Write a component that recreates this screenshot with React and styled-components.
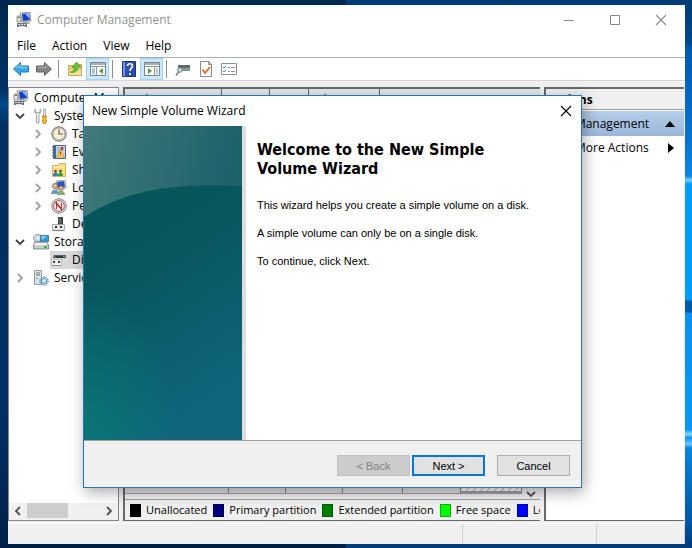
import React from 'react'
import styled, { createGlobalStyle } from 'styled-components'

const GlobalStyle = createGlobalStyle`
	* {
		box-sizing: border-box;
	}
	body {
		margin: 0;
		font-family: "Open Sans", "Noto Sans", sans-serif;
		font-size: 12px;
		line-height: 18px;
		color: #000;
	}
	button {
		font: inherit;
		color: inherit;
		padding: 0;
	}
`

const ComputerIcon = () => (
	<svg width="16" height="16" viewBox="0 0 16 16">
		<path d="M4 1l10-1 1 9-9 1z" fill="#dcdccc" stroke="#77776b" strokeWidth=".7" />
		<path d="M6 2l7-1 1 7-7 1z" fill="#153ccb" />
		<path d="M9 2l4-1 1 6z" fill="#8fb4ff" />
		<path d="M1 4h4v6H1z" fill="#e6e4d8" stroke="#76766c" strokeWidth=".7" />
		<path d="M2 5h2v1H2z" fill="#55606c" />
		<path d="M6 10h7l1 2H5z" fill="#b9b9b0" />
		<path d="M1 11h10v4H1z" fill="#6c757f" />
		<path d="M2 12h2v1H2zM5 12h2v1H5zM8 12h2v1H8zM3 14h6v1H3z" fill="#dbe3ea" />
	</svg>
)

const ToolsIcon = () => (
	<svg width="16" height="16" viewBox="0 0 16 16">
		<path d="M2.500 1C1 2 1 5 3.500 6.500V15h2.500V6.500C8.500 5 8.500 2 7 1v3.500H2.500z" fill="#e9edef" stroke="#8b949a" strokeWidth=".8" />
		<path d="M10.500 1h2v7h-2z" fill="#e4e8ea" stroke="#959ba0" strokeWidth=".7" />
		<path d="M9.500 8h4v2l-1 1 1 1v2l-1 1.500h-2L9.500 14v-2l1-1-1-1z" fill="#f4b41e" stroke="#b87b0a" strokeWidth=".7" />
	</svg>
)

const ClockIcon = () => (
	<svg width="16" height="16" viewBox="0 0 16 16">
		<circle cx="8" cy="8" r="7.200" fill="#c9c7c3" stroke="#77756f" />
		<circle cx="8" cy="8" r="5.600" fill="#fff0d2" stroke="#aaa69a" strokeWidth=".6" />
		<path d="M8 3.500V8h4" fill="none" stroke="#5c5b58" strokeWidth="1.200" />
	</svg>
)

const EventIcon = () => (
	<svg width="16" height="16" viewBox="0 0 16 16">
		<path d="M2.500 1.500h12v13h-12z" fill="#c5d8ea" stroke="#4c6482" />
		<path d="M3 2h2v12H3z" fill="#3a6ca8" />
		<path d="M1 3h3M1 6h3M1 9h3M1 12h3" stroke="#5b646e" />
		<path d="M6 4h7M6 6h7M6 8h4M6 12h7" stroke="#8198b3" strokeWidth=".8" />
		<path d="M10 3h2v3h-2z" fill="#d22" />
		<path d="M9.500 6l4 7h-8z" fill="#ffd83b" stroke="#c58514" strokeWidth=".7" />
		<path d="M9 8h1v3H9z" fill="#c22" />
	</svg>
)

const SharedIcon = () => (
	<svg width="16" height="16" viewBox="0 0 16 16">
		<path d="M1.500 3.500h6l1-2h6v13h-13z" fill="#f8dd83" stroke="#cfa43d" strokeWidth=".8" />
		<path d="M2 5h12" stroke="#fff3bd" />
		<circle cx="4.500" cy="9" r="1.300" fill="#5b4738" />
		<circle cx="9.500" cy="9" r="1.300" fill="#5b4738" />
		<path d="M2 14c0-5 5-5 5 0z" fill="#2782bd" />
		<path d="M7 14c0-5 5-5 5 0z" fill="#3b983f" />
	</svg>
)

const UsersIcon = () => (
	<svg width="16" height="16" viewBox="0 0 16 16">
		<path d="M5 1l9-1 1 8-9 2z" fill="#dadcd7" stroke="#788086" strokeWidth=".7" />
		<path d="M6 2l7-1 1 6-7 1z" fill="#2457ca" />
		<circle cx="4" cy="6" r="2.500" fill="#f0ba88" stroke="#6d4930" strokeWidth=".7" />
		<path d="M0 14c0-6 8-6 8 0z" fill="#7399c2" />
		<circle cx="10" cy="8" r="2.300" fill="#eeb583" stroke="#6d4930" strokeWidth=".7" />
		<path d="M6 15c0-6 8-6 8 0z" fill="#82ad70" />
	</svg>
)

const PerformanceIcon = () => (
	<svg width="16" height="16" viewBox="0 0 16 16">
		<circle cx="8" cy="8" r="7.300" fill="#d0d1d2" stroke="#777c80" strokeWidth=".8" />
		<circle cx="8" cy="8" r="5.300" fill="#fff" stroke="#b44" strokeWidth=".9" />
		<path d="M5.500 11V6M10.500 10V5" fill="none" stroke="#cf3030" strokeWidth="1.200" />
		<path d="M4.500 4l6.500 8" stroke="#962424" strokeWidth="1.400" />
	</svg>
)

const DeviceIcon = () => (
	<svg width="16" height="16" viewBox="0 0 16 16">
		<path d="M7 1h5v8H7z" fill="#3e4346" />
		<path d="M8 2h2v5H8z" fill="#686e71" />
		<path d="M1.500 8.500h12v6h-12z" fill="#e6e8e5" stroke="#9b9f9d" strokeWidth=".8" />
		<path d="M4 10h2v2H4zM9 10h2v2H9z" fill="#353a3b" />
		<path d="M2 14h11v1H2z" fill="#747878" />
	</svg>
)

const StorageIcon = () => (
	<svg width="16" height="16" viewBox="0 0 16 16">
		<ellipse cx="5" cy="4" rx="4.500" ry="3.500" fill="#cfdde2" stroke="#758489" strokeWidth=".7" />
		<circle cx="5" cy="4" r="1" fill="#fff" />
		<path d="M7.500 1.500h8v6h-8z" fill="#2d9de1" stroke="#3d6983" strokeWidth=".8" />
		<path d="M8 2h6l-5 4z" fill="#7ccbf7" />
		<path d="M1.500 8h12l2 3v4h-15v-4z" fill="#c7cfcd" stroke="#6d7777" strokeWidth=".8" />
		<path d="M2 9h11l1 2H1z" fill="#f0f3f2" />
		<path d="M11 12h3v2h-3z" fill="#38b440" />
	</svg>
)

const DiskIcon = () => (
	<svg width="16" height="16" viewBox="0 0 16 16">
		<path d="M2 5l1-2h12v3H2z" fill="#596168" />
		<path d="M5 4h9v2H5z" fill="#30373b" />
		<path d="M12 4h2v1h-2z" fill="#42d74c" />
		<path d="M.500 7.500h10v6H.500z" fill="#f5f5f1" stroke="#aaada8" strokeWidth=".7" />
		<path d="M2 9h2v2H2zM7 9h2v2H7z" fill="#353a3b" />
		<path d="M1 13h9v1H1z" fill="#8d9291" />
	</svg>
)

const ServicesIcon = () => (
	<svg width="16" height="16" viewBox="0 0 16 16">
		<path d="M1.500.500h7v14h-7z" fill="#dce4e9" stroke="#7a8892" strokeWidth=".8" />
		<path d="M3 3h4M3 5h4" stroke="#667782" />
		<path d="M3 8h2v1H3z" fill="#4baa49" />
		<circle cx="11" cy="11" r="4" fill="none" stroke="#5490bd" strokeWidth="1.500" strokeDasharray="1.500 1" />
		<circle cx="11" cy="11" r="2.500" fill="#d8edfa" stroke="#518bb9" />
	</svg>
)

const ArrowIcon = ({ forward }) => (
	<svg width="18" height="16" viewBox="0 0 18 16">
		{forward
			? <path d="M1.500 5h8V1.500L16.500 8l-7 6.500V11h-8z" fill="#858585" stroke="#5f5f5f" />
			: <path d="M16.500 5h-8V1.500L1.500 8l7 6.500V11h8z" fill="#38a9e8" stroke="#2379ad" />}
		{forward
			? <path d="M3 6.500h8V4" fill="none" stroke="#b5b5b5" />
			: <path d="M4 7l4-3v2.500h7" fill="none" stroke="#8ed9ff" />}
	</svg>
)

const FolderUpIcon = () => (
	<svg width="16" height="16" viewBox="0 0 16 16">
		<path d="M1.500 4.500h4l1 1h5l1-2h2v11h-13z" fill="#f0cb6c" stroke="#b99746" strokeWidth=".8" />
		<path d="M2 9h12v5H2z" fill="#fbdf92" />
		<path d="M3 11c4 0 4-2 4-5H5l4.500-5L14 6h-3c0 5-4 6-8 5z" fill="#69c83a" stroke="#399324" strokeWidth=".7" />
	</svg>
)

const PaneIcon = ({ right }) => (
	<svg width="16" height="14" viewBox="0 0 16 14">
		<path d="M.500.500h15v13H.500z" fill="#fff" stroke="#7b858e" />
		<path d="M1 1h14v2H1z" fill="#a5b2bf" />
		<path d="M1 4.500h14" stroke="#8c969f" />
		<path d={right ? 'M10.500 5v8' : 'M6.500 5v8'} stroke="#8c969f" />
		<path d={right ? 'M12 7h2M12 9h2M12 11h2' : 'M2 7h3M2 9h3M2 11h3'} stroke="#558abb" />
		<path d={right ? 'M4 6v6l4-3z' : 'M13 6v6L9 9z'} fill="#45a62a" />
	</svg>
)

const HelpIcon = () => (
	<svg width="14" height="16" viewBox="0 0 14 16">
		<path d="M.500.500h13v15H.500z" fill="#294fb5" stroke="#183680" />
		<path d="M1 1h2v14H1z" fill="#7894d7" />
		<path d="M5.500 5c0-3 5-3 5 0 0 2-2.500 2-2.500 5M8 12v2" fill="none" stroke="#fff" strokeWidth="1.700" />
	</svg>
)

const DriveIcon = () => (
	<svg width="16" height="14" viewBox="0 0 16 14">
		<path d="M3 3h12v6H3z" fill="#8b9599" />
		<path d="M3 3h12v3H3z" fill="#5f686c" />
		<path d="M11 6h3v1h-3z" fill="#42e458" />
		<circle cx="5" cy="8" r="2.300" fill="#c9dee6" stroke="#6d8088" />
		<path d="M3.500 10L1 13.500" stroke="#79838a" strokeWidth="1.500" />
	</svg>
)

const CheckPageIcon = () => (
	<svg width="14" height="16" viewBox="0 0 14 16">
		<path d="M1.500.500h8l3 3v12h-11z" fill="#fff" stroke="#8d8d8d" />
		<path d="M9.500.500v3h3" fill="none" stroke="#8d8d8d" />
		<path d="M3.500 8.500L6 12l5-6" fill="none" stroke="#ec672d" strokeWidth="1.800" />
	</svg>
)

const ListIcon = () => (
	<svg width="16" height="12" viewBox="0 0 16 12">
		<path d="M.500.500h15v11H.500z" fill="#fff" stroke="#8a9299" />
		<path d="M2 4l1 1 2-2M2 8l1 1 2-2" fill="none" stroke="#3686c9" />
		<path d="M7 4.500h2M10 4.500h4M7 8.500h2M10 8.500h4" stroke="#899097" />
	</svg>
)

const Chevron = ({ dir }) => {
	const paths = {
		down: 'M1 3l4 4 4-4',
		right: 'M3 1l4 4-4 4',
		left: 'M7 1L3 5l4 4',
	}
	return (
		<svg width="10" height="10" viewBox="0 0 10 10">
			<path d={paths[dir]} fill="none" stroke="currentColor" strokeWidth="1.800" />
		</svg>
	)
}

const CloseIcon = () => (
	<svg width="12" height="12" viewBox="0 0 12 12">
		<path d="M1 1l10 10M11 1L1 11" stroke="currentColor" strokeWidth="1.100" />
	</svg>
)

const toolbarItems = [
	{ label: 'Back', icon: <ArrowIcon /> },
	{ label: 'Forward', icon: <ArrowIcon forward />, divide: true },
	{ label: 'Up one level', icon: <FolderUpIcon />, wide: true },
	{ label: 'Show console tree', icon: <PaneIcon />, active: true, divide: true },
	{ label: 'Help', icon: <HelpIcon />, wide: true },
	{ label: 'Show action pane', icon: <PaneIcon right />, active: true, divide: true },
	{ label: 'Drive', icon: <DriveIcon />, wide: true },
	{ label: 'Properties', icon: <CheckPageIcon /> },
	{ label: 'List', icon: <ListIcon /> },
]

const treeItems = [
	{ text: 'Computer Management', icon: <ComputerIcon />, level: 0 },
	{ text: 'System Tools', icon: <ToolsIcon />, level: 1, dir: 'down' },
	{ text: 'Task Scheduler', icon: <ClockIcon />, level: 2, dir: 'right' },
	{ text: 'Event Viewer', icon: <EventIcon />, level: 2, dir: 'right' },
	{ text: 'Shared Folders', icon: <SharedIcon />, level: 2, dir: 'right' },
	{ text: 'Local Users', icon: <UsersIcon />, level: 2, dir: 'right' },
	{ text: 'Performance', icon: <PerformanceIcon />, level: 2, dir: 'right' },
	{ text: 'Device Manager', icon: <DeviceIcon />, level: 2 },
	{ text: 'Storage', icon: <StorageIcon />, level: 1, dir: 'down' },
	{ text: 'Disk Management', icon: <DiskIcon />, level: 2, selected: true },
	{ text: 'Services', icon: <ServicesIcon />, level: 1, dir: 'right' },
]

const legend = [
	{ text: 'Unallocated', color: '#000' },
	{ text: 'Primary partition', color: '#000080' },
	{ text: 'Extended partition', color: '#008000' },
	{ text: 'Free space', color: '#00ff00' },
	{ text: 'Logical drive', color: '#0000ff' },
]

const App = () => {
	const [open, setOpen] = React.useState(true)

	return (
		<Desktop>
			<GlobalStyle />
			<Window>
				<TitleBar>
					<ComputerIcon />
					<Title>Computer Management</Title>
					<WindowButton aria-label="Minimize">
						<svg width="12" height="12"><path d="M1 6.500h10" stroke="currentColor" /></svg>
					</WindowButton>
					<WindowButton aria-label="Maximize">
						<svg width="12" height="12"><path d="M1.500 1.500h9v9h-9z" fill="none" stroke="currentColor" /></svg>
					</WindowButton>
					<WindowButton aria-label="Close"><CloseIcon /></WindowButton>
				</TitleBar>
				<MenuBar>
					{['File', 'Action', 'View', 'Help'].map(m => <MenuButton key={m}>{m}</MenuButton>)}
				</MenuBar>
				<Toolbar>
					{toolbarItems.map(t => (
						<React.Fragment key={t.label}>
							<ToolButton aria-label={t.label} $active={t.active} $wide={t.wide}>{t.icon}</ToolButton>
							{t.divide && <Divider />}
						</React.Fragment>
					))}
				</Toolbar>
				<Panels>
					<TreePanel>
						<Tree>
							{treeItems.map(t => (
								<TreeRow key={t.text} $level={t.level}>
									{t.level > 0 && <Twisty $open={t.dir === 'down'}>{t.dir && <Chevron dir={t.dir} />}</Twisty>}
									<TreeLabel $selected={t.selected}>{t.icon}<span>{t.text}</span></TreeLabel>
								</TreeRow>
							))}
						</Tree>
						<ScrollBar>
							<ScrollButton aria-label="Scroll left"><Chevron dir="left" /></ScrollButton>
							<Thumb />
							<ScrollButton aria-label="Scroll right"><Chevron dir="right" /></ScrollButton>
						</ScrollBar>
					</TreePanel>
					<VolumePanel>
						<VolumeTable>
							<thead>
								<tr>
									<HeadCell $width="96px">Volume</HeadCell>
									<HeadCell $width="48px">Layout</HeadCell>
									<HeadCell $width="39px">Type</HeadCell>
									<HeadCell $width="71px">File System</HeadCell>
									<HeadCell>Status</HeadCell>
								</tr>
							</thead>
						</VolumeTable>
						<DiskArea>
							<DiskGraph>
								<DiskCell $grow={104} />
								<DiskCell $grow={56} />
								<DiskCell $grow={56} />
								<DiskCell $grow={59} />
								<DiskCell $grow={58} />
								<DiskCell $grow={60} $hatched />
							</DiskGraph>
							<ScrollButton aria-label="Scroll down"><Chevron dir="down" /></ScrollButton>
						</DiskArea>
						<Legend>
							{legend.map(l => (
								<LegendItem key={l.text}><Swatch $color={l.color} />{l.text}</LegendItem>
							))}
						</Legend>
					</VolumePanel>
					<ActionsPanel>
						<ActionsHead>Actions</ActionsHead>
						<ActionGroup>
							<span>Disk Management</span>
							<svg width="10" height="6"><path d="M0 6l5-6 5 6z" /></svg>
						</ActionGroup>
						<ActionRow>
							<span>More Actions</span>
							<svg width="6" height="10"><path d="M0 0l6 5-6 5z" /></svg>
						</ActionRow>
					</ActionsPanel>
				</Panels>
				<StatusBar>
					<StatusCell $grow={455} />
					<StatusCell $grow={133} />
					<StatusCell $grow={87} />
				</StatusBar>
			</Window>
			{open && (
				<Dialog role="dialog" aria-labelledby="wizard-title">
					<DialogTitleBar>
						<DialogTitle id="wizard-title">New Simple Volume Wizard</DialogTitle>
						<WindowButton $dark aria-label="Close wizard" onClick={() => setOpen(false)}><CloseIcon /></WindowButton>
					</DialogTitleBar>
					<DialogBody>
						<Banner>
							<svg width="100%" height="100%" viewBox="0 0 158 314" preserveAspectRatio="none">
								<defs>
									<linearGradient id="sky" x1="0" y1="0" x2="1" y2=".5">
										<stop offset="0" stopColor="#417a79" />
										<stop offset="1" stopColor="#165c68" />
									</linearGradient>
									<linearGradient id="hill" x1="0" y1="0" x2=".4" y2="1">
										<stop offset="0" stopColor="#055457" />
										<stop offset=".4" stopColor="#07575f" />
										<stop offset="1" stopColor="#10657b" />
									</linearGradient>
									<radialGradient id="glow" cx="0" cy="1" r=".6">
										<stop offset="0" stopColor="#087f78" stopOpacity=".7" />
										<stop offset="1" stopColor="#087f78" stopOpacity="0" />
									</radialGradient>
								</defs>
								<path d="M0 0h158v314H0z" fill="url(#sky)" />
								<path d="M0 91C38 66 85 56 158 60v254H0z" fill="url(#hill)" />
								<path d="M0 91C38 66 85 56 158 60v254H0z" fill="url(#glow)" />
							</svg>
						</Banner>
						<Content>
							<Heading>Welcome to the New Simple<br />Volume Wizard</Heading>
							<p>This wizard helps you create a simple volume on a disk.</p>
							<p>A simple volume can only be on a single disk.</p>
							<p>To continue, click Next.</p>
						</Content>
					</DialogBody>
					<DialogFooter>
						<ButtonPair>
							<WizardButton disabled>&lt; Back</WizardButton>
							<WizardButton $primary>Next &gt;</WizardButton>
						</ButtonPair>
						<WizardButton onClick={() => setOpen(false)}>Cancel</WizardButton>
					</DialogFooter>
				</Dialog>
			)}
		</Desktop>
	)
}

const Desktop = styled.div`
	position: relative;
	min-height: 100vh;
	padding: 5px 7px 4px 8px;
	display: flex;
	overflow: hidden;
	background:
		linear-gradient(180deg, #003a75 0, #004a8c 44px, #0059b0 47px, #0873d0 140px, #0a86e4 176px, #7fd0ff 180px, #009cf8 184px, #009cf8 300px, #0058a8 301px, #0058a8 312px, #0a90f0 313px, #0a98f4 430px, #8cd8ff 434px, #0a94ee 438px, #6cc8ff 444px, #0a84dc 448px, #0058a5 520px, #003a78 100%) right / 50% 100% no-repeat,
		linear-gradient(180deg, #002750 0, #003365 90px, #004a88 105px, #003061 125px, #003166 400px, #00204a 100%);
`
const Window = styled.main`
	flex: 1;
	min-width: 0;
	display: flex;
	flex-direction: column;
	background: #f0f0f0;
`
const TitleBar = styled.header`
	display: flex;
	align-items: center;
	height: 30px;
	padding: 0 1px 0 8px;
	background: #fff;
`
const Title = styled.span`
	flex: 1;
	margin-left: 5px;
	color: #929292;
`
const WindowButton = styled.button`
	width: 46px;
	height: 28px;
	border: 0;
	background: none;
	color: ${p => p.$dark ? '#000' : '#888'};
	display: flex;
	align-items: center;
	justify-content: center;
`
const MenuBar = styled.nav`
	display: flex;
	gap: 16px;
	height: 23px;
	padding: 0 9px;
	background: #fff;
	border-bottom: 1px solid #a9b0b1;
`
const MenuButton = styled.button`
	border: 0;
	background: none;
`
const Toolbar = styled.div`
	display: flex;
	align-items: center;
	height: 23px;
	padding-left: 1px;
	background: #fff;
	border-bottom: 1px solid #d5d5d5;
`
const ToolButton = styled.button`
	display: flex;
	align-items: center;
	justify-content: center;
	width: 23px;
	height: 22px;
	margin-left: ${p => p.$wide ? '4px' : '0'};
	border: 1px solid ${p => p.$active ? '#a0d2f3' : 'transparent'};
	background: ${p => p.$active ? '#cce8ff' : 'none'};
`
const Divider = styled.span`
	width: 1px;
	height: 18px;
	margin-left: 3px;
	background: #8c8c8c;
`
const Panels = styled.div`
	flex: 1;
	min-height: 0;
	display: flex;
	gap: 4px;
	padding: 6px 1px 2px 0;
`
const Panel = styled.section`
	display: flex;
	flex-direction: column;
	min-width: 0;
	overflow: hidden;
	background: #fff;
	border: 1px solid #828790;
`
const TreePanel = styled(Panel)`
	flex: 0 0 111px;
`
const Tree = styled.ul`
	flex: 1;
	margin: 0;
	padding: 1px 0 0;
	list-style: none;
`
const TreeRow = styled.li`
	display: flex;
	align-items: center;
	height: 18px;
	padding-left: ${p => p.$level === 2 ? '21px' : '3px'};
	white-space: nowrap;
`
const Twisty = styled.span`
	flex: none;
	display: flex;
	width: 20px;
	padding-left: 3px;
	color: ${p => p.$open ? '#404040' : '#a0a0a0'};
`
const TreeLabel = styled.span`
	flex: none;
	display: flex;
	align-items: center;
	gap: 5px;
	height: 18px;
	padding-left: 1px;
	background: ${p => p.$selected ? '#d9d9d9' : 'none'};

	svg {
		flex: none;
	}
`
const ScrollBar = styled.div`
	display: flex;
	height: 17px;
	padding-bottom: 2px;
	background: #f0f0f0;
`
const ScrollButton = styled.button`
	display: flex;
	align-items: center;
	justify-content: center;
	width: 18px;
	border: 0;
	background: #f0f0f0;
	color: #505050;
`
const Thumb = styled.span`
	width: 41px;
	margin-right: auto;
	background: #cdcdcd;
`
const VolumePanel = styled(Panel)`
	flex: 1;
	border-width: 2px 0 1px 2px;
	border-color: #696969;
`
const VolumeTable = styled.table`
	width: 100%;
	table-layout: fixed;
	border-collapse: collapse;
`
const HeadCell = styled.th`
	width: ${p => p.$width || 'auto'};
	height: 20px;
	padding: 1px 6px 0;
	border-right: 1px solid #696969;
	background: #e3e6ea;
	font-weight: 400;
	text-align: left;
	white-space: nowrap;
	overflow: hidden;

	&:last-child {
		border-right: 0;
	}
`
const DiskArea = styled.div`
	flex: 1;
	display: flex;
	align-items: flex-end;
	background: #f0f0f0;
`
const DiskGraph = styled.div`
	flex: 1;
	display: flex;
	height: 40px;
	margin-bottom: 5px;
	background: #e3e3e3;
`
const DiskCell = styled.span`
	flex: ${p => p.$grow} 1 0;
	border-right: 1px solid #8a8a8a;
	border-bottom: ${p => p.$hatched ? '3px' : '1px'} solid #a0a0a0;
	background: ${p => p.$hatched ? 'repeating-linear-gradient(135deg, #fff 0 4px, #aaa 4px 5px)' : '#e3e3e3'};
`
const Legend = styled.div`
	display: flex;
	gap: 6px;
	height: 21px;
	align-items: center;
	padding-left: 5px;
	border-top: 1px solid #a0a0a0;
	background: #f0f0f0;
	font-size: 11px;
	white-space: nowrap;
	overflow: hidden;
`
const LegendItem = styled.span`
	flex: none;
	display: flex;
	align-items: center;
	gap: 5px;
`
const Swatch = styled.i`
	width: 11px;
	height: 13px;
	background: ${p => p.$color};
	border: 1px solid rgba(0, 0, 0, .3);
`
const ActionsPanel = styled(Panel)`
	flex: 0 0 140px;
	border-width: 2px 0 1px 2px;
	border-color: #696969;
`
const ActionsHead = styled.h2`
	height: 21px;
	margin: 0;
	padding: 2px 0 0 2px;
	background: #f0f0f0;
	border-bottom: 1px solid #a0a0a0;
	font-size: 12px;
	line-height: 18px;
`
const ActionRow = styled.div`
	display: flex;
	align-items: center;
	justify-content: space-between;
	height: 24px;
	padding: 0 10px 0 29px;

	span {
		white-space: nowrap;
	}
`
const ActionGroup = styled(ActionRow)`
	height: 25px;
	margin-top: 1px;
	padding: 0 9px 0 2px;
	background: linear-gradient(#b5cde9, #9bb7d9);
`
const StatusBar = styled.footer`
	display: flex;
	height: 21px;
	border-top: 1px solid #fff;
`
const StatusCell = styled.span`
	flex: ${p => p.$grow} 1 0;
	border-right: 1px solid #d0d0d0;
`
const Dialog = styled.section`
	position: absolute;
	top: 95px;
	left: 83px;
	right: 110px;
	border: 1px solid #2577ad;
	background: #fff;
	box-shadow: 2px 4px 14px rgba(0, 0, 0, .35);
`
const DialogTitleBar = styled.header`
	display: flex;
	height: 30px;
	align-items: center;
	justify-content: space-between;
	padding-left: 8px;

	button {
		width: 30px;
	}
`
const DialogTitle = styled.span`
	white-space: nowrap;
`
const DialogBody = styled.div`
	display: flex;
	min-height: 314px;
`
const Banner = styled.div`
	display: flex;
	width: 162px;
	border-right: 4px solid #dedede;
`
const Content = styled.div`
	flex: 1;
	padding: 14px 11px;
	font-family: "Liberation Sans", Arial, sans-serif;
	font-size: 11px;
	line-height: 16px;

	p {
		margin: 0 0 12px;
	}
`
const Heading = styled.h1`
	margin: 0 0 19px;
	font-family: "DejaVu Sans Condensed", "Noto Sans", sans-serif;
	font-size: 16px;
	line-height: 19px;
`
const DialogFooter = styled.footer`
	display: flex;
	justify-content: flex-end;
	gap: 12px;
	padding: 14px 11px 11px;
	background: #f0f0f0;
	border-top: 1px solid #a0a0a0;
`
const ButtonPair = styled.div`
	display: flex;
	gap: 2px;
`
const WizardButton = styled.button`
	width: 73px;
	height: 21px;
	border: ${p => p.$primary ? '2px solid #0078d7' : '1px solid #adadad'};
	background: #e1e1e1;
	font-family: "Liberation Sans", Arial, sans-serif;
	font-size: 11px;
	line-height: 16px;

	&:disabled {
		background: #ccc;
		border-color: #bfbfbf;
		color: #838383;
	}
`

export default App
